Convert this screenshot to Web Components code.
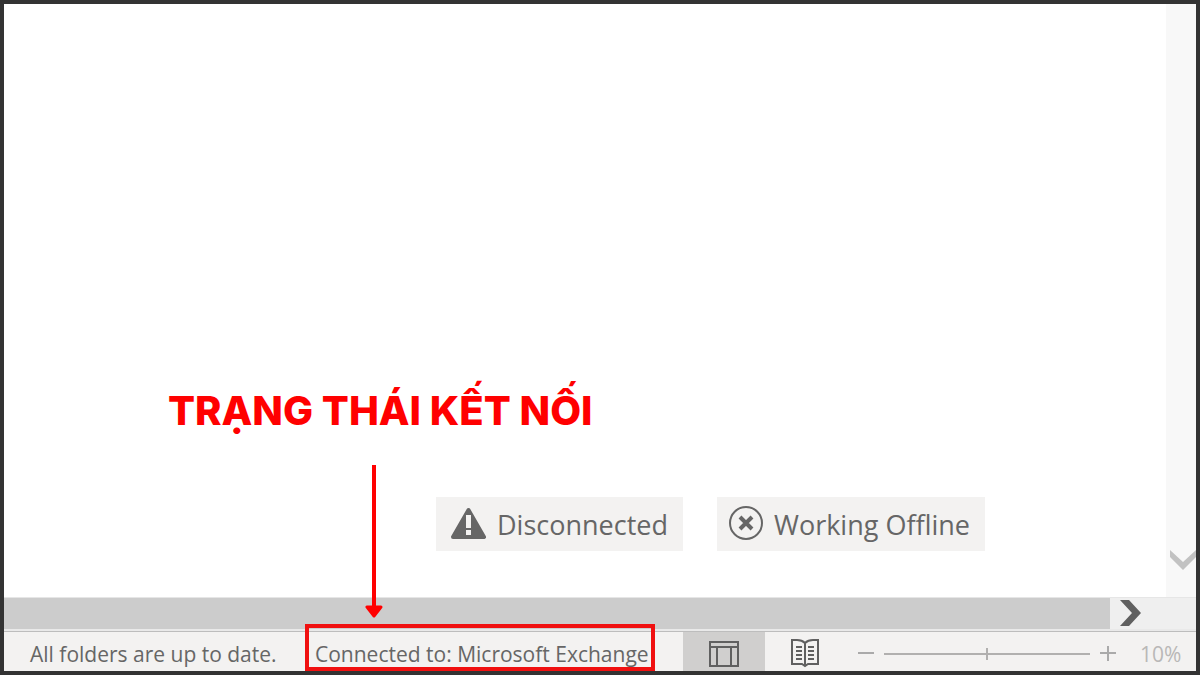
<!DOCTYPE html>
<html lang="vi">
<head>
<meta charset="utf-8">
<title>Outlook status bar</title>
<style>
  body {
    margin: 0;
    font-family: "Open Sans", "Noto Sans", sans-serif;
    color: #666;
  }
</style>
</head>
<body>
<mail-window>
  <mail-canvas slot="canvas">
    <h1 slot="heading">TRẠNG THÁI KẾT NỐI</h1>
    <state-badge>
      <svg slot="icon" width="38" height="36" viewBox="0 0 38 36" aria-hidden="true">
        <path d="M20.500 4 L36 31 H5 Z" fill="#666" stroke="#666" stroke-width="4" stroke-linejoin="round"/>
        <path d="M18 9h5v13h-5zM18 24h5v5h-5z" fill="#f3f2f1"/>
      </svg>
      Disconnected
    </state-badge>
    <state-badge>
      <svg slot="icon" width="34" height="36" viewBox="0 0 34 36" fill="none" stroke="#666" aria-hidden="true">
        <circle cx="17" cy="17" r="16" stroke-width="2"/>
        <path d="M11 11l12 12M23 11l-12 12" stroke-width="4"/>
      </svg>
      Working Offline
    </state-badge>
  </mail-canvas>
  <status-bar slot="status">
    <span slot="folders">All folders are up to date.</span>
    <status-callout slot="connection">Connected to: Microsoft Exchange</status-callout>
    <zoom-control slot="zoom">10%</zoom-control>
  </status-bar>
</mail-window>

<template id="window-template">
  <style>
    :host {
      display: flex;
      flex-direction: column;
      box-sizing: border-box;
      min-height: 100vh;
      border: 4px solid #333;
      background: #fff;
      overflow: hidden;
    }
    button {
      display: block;
      padding: 0;
      border: none;
      background: none;
    }
    svg {
      display: block;
    }
    .main {
      display: flex;
      flex: 1;
    }
    .canvas {
      flex: 1;
      display: flex;
    }
    .vertical {
      display: flex;
      flex-direction: column;
      justify-content: flex-end;
      width: 30px;
      padding-bottom: 24px;
      box-sizing: border-box;
      background: #f8f8f8;
    }
    .horizontal {
      display: flex;
      height: 31px;
      border-top: 1px solid #e6e6e6;
      border-bottom: 2px solid #e9e9e9;
      background: #efefef;
    }
    .thumb {
      flex: 1;
      background: #ccc;
    }
    .horizontal button {
      width: 86px;
      padding-left: 8px;
    }
  </style>
  <div class="main">
    <div class="canvas"><slot name="canvas"></slot></div>
    <div class="vertical">
      <button type="button" aria-label="Scroll down">
        <svg width="30" height="24" viewBox="0 0 30 24"><path d="M4 1v7l13 13L30 8V1L17 13z" fill="#c2c2c2"/></svg>
      </button>
    </div>
  </div>
  <div class="horizontal">
    <div class="thumb"></div>
    <button type="button" aria-label="Scroll right">
      <svg width="28" height="30" viewBox="0 0 28 30"><path d="M2 1h9l12 13-12 13H2l12-13z" fill="#606060"/></svg>
    </button>
  </div>
  <slot name="status"></slot>
</template>

<template id="canvas-template">
  <style>
    :host {
      flex: 1;
      display: flex;
      flex-direction: column;
      justify-content: flex-end;
      gap: 62px;
      padding-bottom: 46px;
    }
    ::slotted(h1) {
      margin: 0 0 0 164px;
      font: 850 40px/48px Inter, sans-serif;
      color: #f00;
    }
    .badges {
      display: flex;
      gap: 34px;
      padding-left: 432px;
    }
  </style>
  <slot name="heading"></slot>
  <div class="badges"><slot></slot></div>
</template>

<template id="badge-template">
  <style>
    :host {
      display: flex;
      align-items: center;
      gap: 11px;
      height: 54px;
      padding: 0 15px 0 12px;
      background: #f3f2f1;
      font-size: 27px;
      white-space: nowrap;
    }
    ::slotted(svg) {
      display: block;
    }
  </style>
  <slot name="icon"></slot>
  <span><slot></slot></span>
</template>

<template id="status-template">
  <style>
    :host {
      display: flex;
      align-items: stretch;
      height: 40px;
      padding: 0 15px 0 26px;
      border-top: 1px solid #bdbdbd;
      box-sizing: border-box;
      background: #f3f2f1;
      font-size: 21px;
      line-height: 44px;
      white-space: nowrap;
    }
    .folders {
      width: 275px;
    }
    .views {
      display: flex;
      margin-left: auto;
    }
    .views button {
      display: flex;
      align-items: center;
      justify-content: center;
      width: 82px;
      padding: 4px 0 0;
      border: none;
      background: none;
    }
    .views button[aria-pressed="true"] {
      background: #d0cfce;
    }
  </style>
  <div class="folders"><slot name="folders"></slot></div>
  <slot name="connection"></slot>
  <div class="views">
    <button type="button" aria-label="Normal view" aria-pressed="true">
      <svg width="30" height="26" viewBox="0 0 30 26" fill="none" stroke="#606060" stroke-width="2">
        <path d="M1 1h28v24H1zM1 6h28M8 6v19M22 6v19"/>
      </svg>
    </button>
    <button type="button" aria-label="Reading view" aria-pressed="false">
      <svg width="30" height="30" viewBox="0 0 30 30" fill="none" stroke="#606060" stroke-width="2">
        <path d="M14 4C12 2 10 1 6 1H1v24h10l3 2 3-2h10V1h-5c-4 0-6 1-8 3v23"/>
        <path d="M5 8h6M5 12h6M5 16h6M5 20h6M17 8h6M17 12h6M17 16h6M17 20h6"/>
      </svg>
    </button>
  </div>
  <slot name="zoom"></slot>
</template>

<template id="callout-template">
  <style>
    :host {
      display: block;
      position: relative;
      box-sizing: border-box;
      width: 350px;
      padding-left: 10px;
    }
    .frame {
      position: absolute;
      inset: -8px 0 0 0;
      border: 4px solid #f01010;
    }
    .arrow {
      position: absolute;
      left: 60px;
      bottom: 52px;
    }
  </style>
  <slot></slot>
  <div class="frame"></div>
  <svg class="arrow" width="18" height="154" viewBox="0 0 18 154" aria-hidden="true">
    <path d="M9 0v144" stroke="#f00" stroke-width="4"/>
    <path d="M2 142h14l-7 9z" fill="#f00" stroke="#f00" stroke-width="3" stroke-linejoin="round"/>
  </svg>
</template>

<template id="zoom-template">
  <style>
    :host {
      display: flex;
      align-items: center;
      gap: 10px;
      padding: 4px 0 0 11px;
      color: #b9b8b7;
    }
    button {
      padding: 0;
      border: none;
      background: none;
      font: inherit;
      color: inherit;
    }
    svg {
      display: block;
    }
    input {
      appearance: none;
      width: 206px;
      height: 14px;
      margin: 0;
      background: linear-gradient(#b1b0af, #b1b0af) center / 100% 2px no-repeat;
    }
    input::-webkit-slider-thumb {
      appearance: none;
      width: 2px;
      height: 12px;
      background: #b1b0af;
    }
    .level {
      width: 41px;
      margin-left: 14px;
    }
  </style>
  <button type="button" aria-label="Zoom out">
    <svg width="16" height="16" viewBox="0 0 16 16" stroke="#aaa" stroke-width="2"><path d="M0 7h16"/></svg>
  </button>
  <input type="range" min="0" max="100" value="50" aria-label="Zoom">
  <button type="button" aria-label="Zoom in">
    <svg width="16" height="16" viewBox="0 0 16 16" stroke="#aaa" stroke-width="2"><path d="M0 7h16M8 0v15"/></svg>
  </button>
  <button type="button" class="level"><slot></slot></button>
</template>

<script>
  /**
   * Defines a custom element that renders the given template in its shadow root.
   */
  const define = (name, templateId) => {
    const template = document.querySelector(templateId)

    customElements.define(name,
      class extends HTMLElement {
        constructor () {
          super()
          this.attachShadow({ mode: 'open' })
          this.shadowRoot.appendChild(template.content.cloneNode(true))
        }
      })
  }

  define('mail-window', '#window-template')
  define('mail-canvas', '#canvas-template')
  define('state-badge', '#badge-template')
  define('status-bar', '#status-template')
  define('status-callout', '#callout-template')
  define('zoom-control', '#zoom-template')
</script>
</body>
</html>
